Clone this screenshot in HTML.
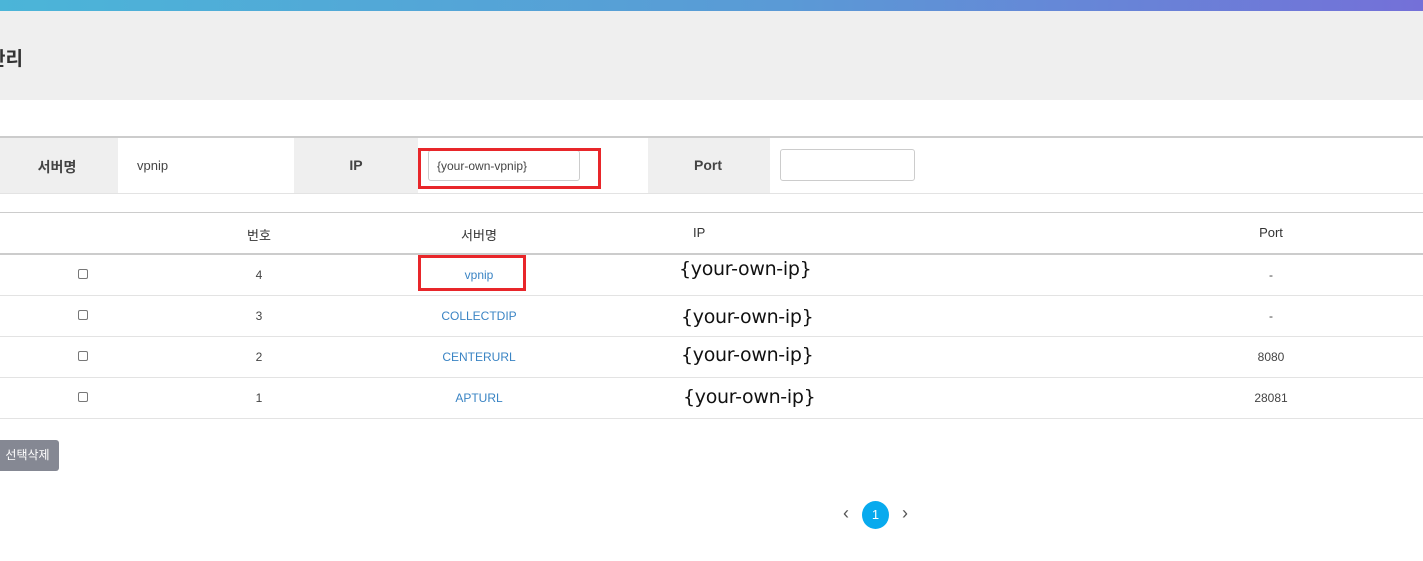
<!DOCTYPE html>
<html><head><meta charset="utf-8"><style>
*{margin:0;padding:0;box-sizing:border-box}
body{width:1423px;height:561px;position:relative;background:#fff;font-family:"Liberation Sans","Noto Sans CJK KR",sans-serif;overflow:hidden;color:#333}
.a{position:absolute}
.c{position:absolute;text-align:center;transform:translateX(-50%);white-space:nowrap}
.lnk{color:#3a84c4;font-size:12px}
.n{font-size:12px;color:#444}
.ip{font-size:19px;color:#111;font-family:"DejaVu Sans","Liberation Sans",sans-serif;letter-spacing:-0.3px}
.cb{position:absolute;width:10px;height:10px;border:1px solid #777;border-radius:2px;background:#fff}
.hl{position:absolute;left:0;width:1423px;background:#e3e3e3;height:1px}
.lb{font-size:14px;font-weight:bold;color:#444}
</style></head><body>
<div class="a" style="left:0;top:0;width:1423px;height:11px;background:linear-gradient(90deg,#4bb5d8,#5a9ad6 55%,#7470d8)"></div>
<div class="a" style="left:0;top:11px;width:1423px;height:89px;background:#efefef"></div>
<div class="a" style="left:-12px;top:44px;font-size:19px;font-weight:bold;color:#333">관리</div>

<div class="a" style="left:0;top:136px;width:1423px;height:2px;background:#ccc"></div>
<div class="a" style="left:0;top:138px;width:118px;height:55px;background:#efefef"></div>
<div class="a" style="left:294px;top:138px;width:124px;height:55px;background:#efefef"></div>
<div class="a" style="left:648px;top:138px;width:122px;height:55px;background:#efefef"></div>
<div class="hl" style="top:193px"></div>
<div class="c lb" style="left:57px;top:157px">서버명</div>
<div class="a" style="left:137px;top:158px;font-size:13px;color:#444">vpnip</div>
<div class="c lb" style="left:356px;top:157px">IP</div>
<div class="a" style="left:428px;top:150px;width:152px;height:31px;border:1px solid #ccc;border-radius:3px;font-size:12px;padding:8px 8px;color:#444">{your-own-vpnip}</div>
<div class="a" style="left:418px;top:148px;width:183px;height:41px;border:3px solid #e8262a"></div>
<div class="c lb" style="left:708px;top:157px">Port</div>
<div class="a" style="left:780px;top:149px;width:135px;height:32px;border:1px solid #ccc;border-radius:3px"></div>

<div class="a" style="left:0;top:212px;width:1423px;height:1px;background:#ccc"></div>
<div class="c" style="left:259px;top:225px;font-size:13px">번호</div>
<div class="c" style="left:479px;top:225px;font-size:13px">서버명</div>
<div class="a" style="left:693px;top:225px;font-size:13px">IP</div>
<div class="c" style="left:1271px;top:225px;font-size:13px">Port</div>
<div class="a" style="left:0;top:253px;width:1423px;height:2px;background:#ccc"></div>

<div class="cb" style="left:78px;top:269px"></div>
<div class="c n" style="left:259px;top:268px">4</div>
<div class="c lnk" style="left:479px;top:268px">vpnip</div>
<div class="a" style="left:418px;top:255px;width:108px;height:36px;border:3px solid #e8262a"></div>
<div class="a ip" style="left:679px;top:258px">{your-own-ip}</div>
<div class="c n" style="left:1271px;top:268px">-</div>
<div class="hl" style="top:295px"></div>

<div class="cb" style="left:78px;top:310px"></div>
<div class="c n" style="left:259px;top:309px">3</div>
<div class="c lnk" style="left:479px;top:309px">COLLECTDIP</div>
<div class="a ip" style="left:681px;top:306px">{your-own-ip}</div>
<div class="c n" style="left:1271px;top:309px">-</div>
<div class="hl" style="top:336px"></div>

<div class="cb" style="left:78px;top:351px"></div>
<div class="c n" style="left:259px;top:350px">2</div>
<div class="c lnk" style="left:479px;top:350px">CENTERURL</div>
<div class="a ip" style="left:681px;top:344px">{your-own-ip}</div>
<div class="c n" style="left:1271px;top:350px">8080</div>
<div class="hl" style="top:377px"></div>

<div class="cb" style="left:78px;top:392px"></div>
<div class="c n" style="left:259px;top:391px">1</div>
<div class="c lnk" style="left:479px;top:391px">APTURL</div>
<div class="a ip" style="left:683px;top:386px">{your-own-ip}</div>
<div class="c n" style="left:1271px;top:391px">28081</div>
<div class="hl" style="top:418px"></div>

<div class="a" style="left:-4px;top:440px;width:63px;height:31px;background:#858893;border-radius:3px;color:#fff;font-size:12px;line-height:31px;text-align:center">선택삭제</div>

<div class="c" style="left:846px;top:503px;font-size:18px;color:#555">‹</div>
<div class="a" style="left:862px;top:501px;width:27px;height:28px;border-radius:50%;background:#08aaee;color:#fff;font-size:13px;line-height:28px;text-align:center">1</div>
<div class="c" style="left:905px;top:503px;font-size:18px;color:#555">›</div>
</body></html>
